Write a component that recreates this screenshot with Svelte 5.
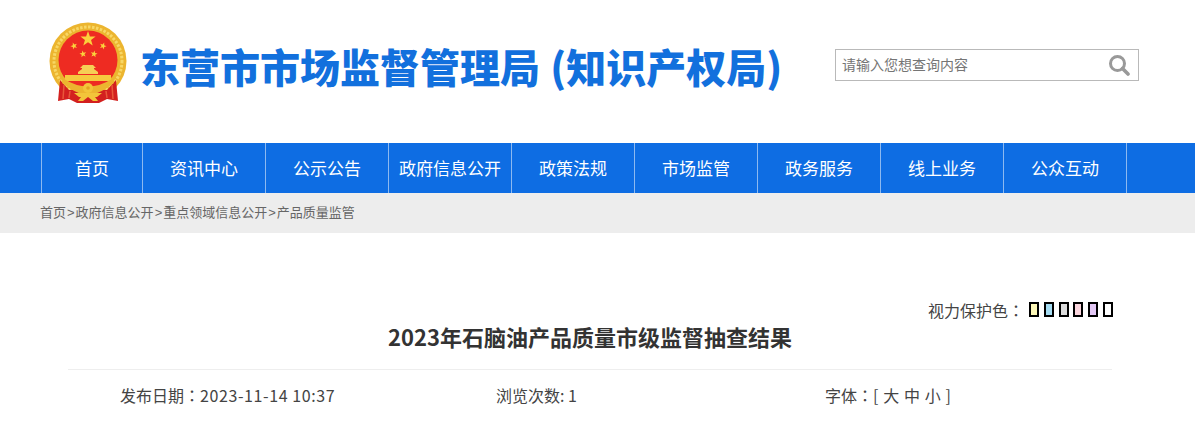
<script>
	const navItems = ['首页', '资讯中心', '公示公告', '政府信息公开', '政策法规', '市场监管', '政务服务', '线上业务', '公众互动'];
	const crumbs = ['首页', '政府信息公开', '重点领域信息公开', '产品质量监管'];
	const eyeColors = ['#fdf8b8', '#a5dcf2', '#dcdcdc', '#fbd6de', '#e3c8f5', '#ffffff'];
	const smallStars = [
		[25, 24, -20],
		[54, 24, 20],
		[34, 32, -10],
		[45, 32, 10]
	];

	function starPoints(cx, cy, r) {
		const pts = [];
		for (let i = 0; i < 10; i++) {
			const rad = i % 2 === 0 ? r : r * 0.4;
			const a = (Math.PI / 5) * i - Math.PI / 2;
			pts.push(`${(cx + rad * Math.cos(a)).toFixed(2)},${(cy + rad * Math.sin(a)).toFixed(2)}`);
		}
		return pts.join(' ');
	}
</script>

<div class="page">
	<header class="header">
		<svg class="emblem" width="78" height="84" viewBox="0 0 78 84" aria-hidden="true">
			<circle cx="39" cy="39" r="38.5" fill="#ecb52f" />
			<circle cx="39" cy="39" r="34" fill="none" stroke="#f8d765" stroke-width="3" stroke-dasharray="2.5 1.5" />
			<circle cx="39" cy="38" r="29.5" fill="#ee2b22" />
			<polygon points={starPoints(39, 17, 8)} fill="#fbd23c" />
			{#each smallStars as [x, y, rot]}
				<polygon points={starPoints(x, y, 3.6)} fill="#fbd23c" transform="rotate({rot} {x} {y})" />
			{/each}
			<path d="M31 46 L34 43 H44 L47 46 H45 V47 L49 50 V52 H29 V50 L33 47 V46 Z" fill="#f6cf55" />
			<rect x="16" y="53" width="46" height="6" fill="#f6c93f" />
			<path d="M11 58 L9 79 L20 77 L28 81 H50 L58 77 L69 79 L67 58 L58 68 H20 Z" fill="#d3201f" />
			<path d="M15 63 L14 77 M21 69 L20 76 M63 63 L64 77 M57 69 L58 76" stroke="#e9573a" stroke-width="1.5" fill="none" />
			<path d="M15 57 Q39 72 63 57 L65 61 Q50 72 44 72 H34 Q28 72 13 61 Z" fill="#ecb52f" />
			<circle cx="39" cy="66" r="5" fill="#f3c53a" />
			<path d="M25 71 H53 L48 75 H46 L49 79 H44 L39 75 L34 79 H29 L32 75 H30 Z" fill="#f3c53a" />
			<circle cx="39" cy="66" r="1.8" fill="#e2a422" />
		</svg>
		<h1 class="site-title">东营市市场监督管理局 (知识产权局)</h1>
		<div class="search">
			<span class="placeholder">请输入您想查询内容</span>
			<svg width="22" height="22" viewBox="0 0 22 22" aria-hidden="true">
				<circle cx="9.5" cy="9.5" r="7" fill="none" stroke="#999" stroke-width="3" />
				<path d="M14.5 14.5 L20 20" stroke="#999" stroke-width="3.6" stroke-linecap="round" />
			</svg>
		</div>
	</header>

	<nav class="nav">
		<ul>
			{#each navItems as item}
				<li>{item}</li>
			{/each}
		</ul>
	</nav>

	<div class="crumbs">
		{#each crumbs as c, i}
			{#if i > 0}<span class="sep">&gt;</span>{/if}<span>{c}</span>
		{/each}
	</div>

	<main class="article">
		<div class="eye">
			<span class="eye-label">视力保护色<span class="colon">：</span></span>
			<div class="swatches">
				{#each eyeColors as color}
					<i class="swatch" style="background: {color}"></i>
				{/each}
			</div>
		</div>
		<h2>2023年石脑油产品质量市级监督抽查结果</h2>
		<div class="meta">
			<span>发布日期<span class="colon">：</span><span class="stamp">2023-11-14 10:37</span></span>
			<span>浏览次数: 1</span>
			<span class="size">字体<span class="colon">：</span>[ 大 中 小 ]</span>
		</div>
	</main>
</div>

<style>
	:global(body) {
		background: #fff;
	}

	.page {
		height: 424px;
		overflow: hidden;
		font-family: "Noto Sans CJK SC", sans-serif;
	}

	.header {
		height: 143px;
		display: flex;
		align-items: flex-start;
		box-sizing: border-box;
		padding: 22px 56px 0 49px;
	}

	.emblem {
		flex: none;
	}

	.site-title {
		margin: 14px 0 0 13px;
		font-size: 40px;
		font-weight: 900;
		line-height: 60px;
		word-spacing: 1px;
		color: #1270dd;
		white-space: nowrap;
		flex: none;
	}

	.search {
		width: 304px;
		height: 32px;
		margin: 27px 0 0 auto;
		box-sizing: border-box;
		border: 1px solid #b9b9b9;
		display: flex;
		align-items: center;
		justify-content: space-between;
		padding: 0 8px 0 6px;
		font-size: 14px;
		color: #757575;
	}

	.placeholder {
		margin-bottom: 2px;
	}

	.nav {
		height: 50px;
		background: #0e6de3;
		padding-left: 41px;
	}

	.nav ul {
		display: flex;
		margin: 0;
		padding: 0;
		list-style: none;
		height: 100%;
	}

	.nav li {
		width: 123px;
		box-sizing: border-box;
		border-left: 1px solid #8db9f0;
		color: #fff;
		font-size: 17px;
		line-height: 50px;
		text-align: center;
		white-space: nowrap;
	}

	.nav li:first-child {
		width: 101px;
	}

	.nav li:last-child {
		border-right: 1px solid #8db9f0;
		width: 124px;
	}

	.crumbs {
		height: 40px;
		box-sizing: border-box;
		padding: 0 0 2px 40px;
		line-height: 38px;
		background: #ededed;
		font-size: 13px;
		color: #666;
	}

	.sep {
		margin: 0 1px;
		font-family: "Liberation Sans", sans-serif;
	}

	.article {
		margin: 0 83px 0 68px;
	}

	.eye {
		display: flex;
		align-items: center;
		justify-content: flex-end;
		gap: 5px;
		height: 24px;
		margin: 64px -1px 0 0;
		font-size: 16px;
		color: #444;
	}

	.eye-label {
		padding-top: 2px;
	}

	.colon {
		font-family: "Noto Sans CJK TC", sans-serif;
	}

	.swatches {
		display: flex;
		gap: 4.8px;
	}

	.swatch {
		width: 6px;
		height: 11px;
		border: 2px solid #000;
		display: block;
	}

	h2 {
		margin: -3px 0 0;
		font-size: 22px;
		font-weight: 700;
		line-height: 36px;
		color: #333;
		text-align: center;
		height: 51px;
		border-bottom: 1px solid #eee;
		box-sizing: content-box;
	}

	.meta {
		display: grid;
		grid-template-columns: 376px 329px 1fr;
		padding-left: 52px;
		margin-top: 14px;
		font-size: 16px;
		line-height: 22px;
		color: #444;
	}

	.stamp {
		letter-spacing: 0.6px;
	}

	.size {
		word-spacing: 1.2px;
	}
</style>
